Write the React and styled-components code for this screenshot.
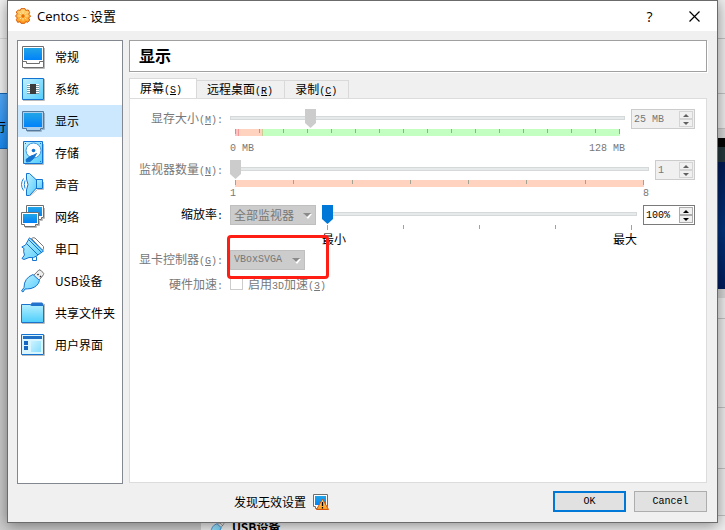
import * as React from 'react';
import styled, { createGlobalStyle, css } from 'styled-components';

const GlobalStyle = createGlobalStyle`
  * {
    box-sizing: border-box;
  }
  body {
    margin: 0;
    color: #000;
    font-family: "Noto Sans CJK SC", sans-serif;
    font-size: 12px;
    line-height: 16px;
  }
  button, input, select {
    margin: 0;
    font-family: inherit;
    font-size: inherit;
  }
`;

const Desktop = styled.div`
  position: relative;
  display: flex;
  flex-direction: column;
  min-height: 100vh;
  padding: 0 7px 7px;
  overflow: hidden;
`;

/* manager window lying under the dialog */

const Backdrop = styled.div`
  position: absolute;
  inset: 0;
  display: grid;
  grid-template-columns: 201px 1fr;
  background: #f0f0f0;
`;

const MachineList = styled.div`
  display: flex;
  flex-direction: column;
  background: #cdcdcd;
`;

const ListToolbar = styled.div`
  height: 93px;
  background: linear-gradient(#f4f4f4 38px, #dcdcdc 38px, #dcdcdc 39px, #f6f6f6 39px);
`;

const ActiveMachine = styled.div`
  display: flex;
  align-items: center;
  height: 56px;
  padding-top: 12px;
  background: linear-gradient(#53adff, #1c8ef6);
  border-top: 1px solid #1668b8;
  border-bottom: 1px solid #1668b8;
`;

const MachineState = styled.span`
  margin-left: -6px;
`;

const Details = styled.div`
  display: flex;
  flex-direction: column;
`;

const Section = styled.div`
  flex: none;
  height: ${(p) => p.$height}px;
  border-bottom: 1px solid #c4c4c4;
`;

const Preview = styled.div`
  flex: none;
  height: 169px;
  border: solid #d9d9d9;
  border-width: 9px 0;
  background: linear-gradient(#050505 9px, #26383d 9px, #26383d 24px, #001a55 24px, #00317c 60%, #001d5e);
`;

const DetailsTitle = styled.div`
  display: flex;
  align-items: flex-start;
  gap: 7px;
  padding: 4px 0 0 8px;
  font-weight: 700;
  line-height: 14px;
`;

/* dialog */

const Dialog = styled.div`
  position: relative;
  flex: 1;
  display: flex;
  flex-direction: column;
  background: #f0f0f0;
  border: 1px solid #6b6b6b;
  box-shadow: 0 2px 14px rgba(0, 0, 0, 0.45);
`;

const TitleBar = styled.header`
  display: flex;
  align-items: center;
  height: 30px;
  padding-left: 7px;
  background: #fff;
`;

const Title = styled.h1`
  flex: 1;
  margin: 0 0 0 6px;
  font-family: "Open Sans", "Noto Sans CJK SC", sans-serif;
  font-size: 13px;
  font-weight: 400;
`;

const TitleButton = styled.button`
  display: flex;
  align-items: center;
  justify-content: center;
  width: 45px;
  height: 30px;
  padding: 0;
  border: none;
  background: none;
  font-family: "Open Sans", sans-serif;
  font-size: 14px;
`;

const Body = styled.div`
  flex: 1;
  display: flex;
  gap: 6px;
  padding: 9px 10px 0 9px;
`;

const Sidebar = styled.nav`
  flex: none;
  width: 106px;
  background: #fff;
  border: 1px solid #828790;
`;

const SidebarItem = styled.a`
  display: flex;
  align-items: center;
  gap: 10px;
  height: 32px;
  padding-left: 3px;
  color: #000;
  white-space: nowrap;
  text-decoration: none;
  background: ${(p) => (p.$active ? '#cce8ff' : 'transparent')};
`;

const Content = styled.main`
  flex: 1;
  display: flex;
  flex-direction: column;
`;

const Heading = styled.h2`
  margin: 0 0 6px;
  height: 32px;
  padding-left: 9px;
  font-size: 16px;
  line-height: 28px;
  background: #fff;
  border: 1px solid #a0a0a0;
  box-shadow: 1px 1px #fff;
`;

const TabList = styled.div`
  display: flex;
  align-items: flex-end;
  height: 20px;
`;

const Tab = styled.button`
  height: 18px;
  padding: 0 11px 0 10px;
  line-height: 16px;
  background: #f0f0f0;
  border: 1px solid #d9d9d9;
  border-left: none;
  border-bottom: none;
  ${(p) => p.$active && css`
    height: 21px;
    margin-bottom: -1px;
    padding: 0 14px 0 10px;
    line-height: 18px;
    background: #fff;
    border-left: 1px solid #d9d9d9;
  `}
`;

const Panel = styled.div`
  flex: 1;
  display: flex;
  flex-direction: column;
  padding: 10px 11px 10px 9px;
  margin-bottom: 1px;
  background: #fff;
  border: 1px solid #dcdcdc;
`;

const Row = styled.div`
  display: grid;
  grid-template-columns: 84px 1fr;
  column-gap: 7px;
  margin-bottom: ${(p) => p.$after || 5}px;
  color: ${(p) => (p.$enabled ? '#000' : '#787878')};
`;

const Label = styled.label`
  line-height: 18px;
  text-align: right;
  white-space: nowrap;
`;

const Mono = styled.span`
  font-family: "Liberation Mono", monospace;
  font-size: 10px;
`;

const Field = styled.div`
  position: relative;
  display: flex;
  align-items: flex-start;
  gap: 6px;
`;

const SliderBox = styled.div`
  flex: 1;
  min-width: 0;
`;

const Range = styled.input`
  appearance: none;
  display: block;
  width: 100%;
  height: 19px;
  margin-bottom: 1px;
  background: none;
  &::-webkit-slider-runnable-track {
    height: 19px;
    background:
      linear-gradient(#e7eaea, #e7eaea) 1px 8px / calc(100% - 2px) 2px no-repeat,
      linear-gradient(#d6d9d9, #d6d9d9) 0 7px / 100% 4px no-repeat;
  }
  &::-webkit-slider-thumb {
    appearance: none;
    width: 11px;
    height: 19px;
    border: none;
    border-radius: 0;
    background: #0078d7;
    clip-path: polygon(0 0, 100% 0, 100% 14px, 50% 100%, 0 14px);
  }
  &:disabled::-webkit-slider-thumb {
    background: #ccc;
  }
`;

const Scale = styled.div`
  display: flex;
  justify-content: space-between;
  height: 7px;
  margin: 0 5px;
  background: ${(p) => p.$fill || 'none'};
`;

const Tick = styled.span`
  width: 1px;
  height: 4px;
  background: #a3a394;
  &:first-child, &:last-child {
    height: 5px;
  }
`;

const Limits = styled.div`
  display: flex;
  justify-content: space-between;
  margin-top: ${(p) => p.$gap || 0}px;
  line-height: 13px;
`;

const Spin = styled.div`
  display: flex;
  align-items: center;
  width: ${(p) => p.$width}px;
  height: 20px;
  padding: 0 1px 0 2px;
  background: ${(p) => (p.$enabled ? '#fff' : '#f0f0f0')};
  border: 1px solid ${(p) => (p.$enabled ? '#7a7a7a' : '#ccc')};
`;

const SpinInput = styled.input`
  flex: 1;
  min-width: 0;
  padding: 0;
  border: none;
  background: none;
  color: #000;
  font-family: "Liberation Mono", monospace;
  font-size: 10px;
  outline: none;
  &:disabled {
    color: #787878;
  }
`;

const SpinButtons = styled.div`
  display: flex;
  flex-direction: column;
  width: 14px;
`;

const SpinButton = styled.button`
  display: flex;
  align-items: center;
  justify-content: center;
  height: 8px;
  padding: 0;
  background: #f0f0f0;
  border: 1px solid #acacac;
  color: #000;
  &:disabled {
    border-color: #d4d4d4;
    color: #606060;
  }
`;

const SelectBox = styled.div`
  position: relative;
  width: ${(p) => p.$width}px;
  height: 20px;
`;

const Select = styled.select`
  appearance: none;
  display: block;
  width: 100%;
  height: 20px;
  padding: 0 0 0 3px;
  border: 1px solid #bfbfbf;
  border-radius: 0;
  background: #ccc;
  color: #787878;
  line-height: 16px;
  opacity: 1;
  ${(p) => p.$mono && css`
    font-family: "Liberation Mono", monospace;
    font-size: 10px;
  `}
`;

const SelectArrow = styled.svg`
  position: absolute;
  right: 4px;
  top: 8px;
  pointer-events: none;
`;

const Highlight = styled.div`
  position: absolute;
  z-index: 1;
  top: -15px;
  left: -3px;
  width: 102px;
  height: 44px;
  border: 3px solid #ff1e14;
  border-radius: 4px;
  pointer-events: none;
`;

const AccelRow = styled(Row)`
  align-items: center;
  height: 14px;
`;

const Check = styled.input`
  appearance: none;
  width: 13px;
  height: 13px;
  background: #fff;
  border: 1px solid #ccc;
`;

const CheckLabel = styled.label`
  margin-left: -1px;
  line-height: 14px;
`;

const Footer = styled.footer`
  display: flex;
  gap: 8px;
  padding: 7px 10px 10px;
`;

const Status = styled.div`
  flex: 1;
  display: flex;
  align-items: center;
  justify-content: center;
  gap: 7px;
`;

const Button = styled.button`
  width: 73px;
  height: 21px;
  padding: 0;
  background: #e1e1e1;
  border: ${(p) => (p.$primary ? '2px solid #0078d7' : '1px solid #adadad')};
  font-family: "Liberation Mono", monospace;
  font-size: 10px;
`;

/* icons */

const Shades = styled.svg`
  position: absolute;
`;

const Defs = () => (
  <Shades width="0" height="0" aria-hidden="true">
    <defs>
      <linearGradient id="screen" x1="0" y1="0" x2="0" y2="1">
        <stop offset="0" stopColor="#22a5e6" />
        <stop offset="1" stopColor="#0082fa" />
      </linearGradient>
      <linearGradient id="pale" x1="0" y1="0" x2="1" y2="1">
        <stop offset="0" stopColor="#c4f1ff" />
        <stop offset="1" stopColor="#52cdfc" />
      </linearGradient>
      <linearGradient id="folder" x1="0" y1="0" x2="0" y2="1">
        <stop offset="0" stopColor="#b5f0ff" />
        <stop offset="1" stopColor="#4ccdfb" />
      </linearGradient>
      <linearGradient id="orange" x1="0" y1="0" x2="0" y2="1">
        <stop offset="0" stopColor="#ffd77a" />
        <stop offset="1" stopColor="#ff9a1a" />
      </linearGradient>
    </defs>
  </Shades>
);

const Icon = ({ size = 24, children }) => (
  <svg width={size} height={size} viewBox="0 0 24 24" fill="none" aria-hidden="true">
    {children}
  </svg>
);

const GeneralIcon = () => (
  <Icon>
    <path d="M3 23.5H23.5V3" stroke="#bbb" />
    <path d="M1.5 1.5H22.5V22.5H1.5Z" fill="#fff" stroke="#6e6e6e" />
    <path d="M2 16.5H5.5V18.5H18.5V16.5H22" stroke="#6e6e6e" />
    <path d="M3 3H21V15H3Z" fill="url(#screen)" />
  </Icon>
);

const SystemIcon = () => (
  <Icon>
    <path d="M2 23.5H23.5V2" stroke="#bbb" />
    <path d="M1.5 1.5H22.5V22.5H1.5Z" fill="url(#pale)" stroke="#1473d0" />
    <path d="M6 7.5H18M6 9.5H18M6 11.5H18M6 13.5H18M6 15.5H18" stroke="#fff" />
    <path d="M6 8.5H18M6 10.5H18M6 12.5H18M6 14.5H18M6 16.5H18" stroke="#7a9aa8" />
    <path d="M9 7H15V17H9Z" fill="#3c3c3c" />
  </Icon>
);

const DisplayIcon = () => (
  <Icon>
    <path d="M6 22.5H20.5V20.5H23.5V4" stroke="#9ab3c7" />
    <path d="M1.5 2.5H22.5V19.5H19.5V21.5H5.5V19.5H1.5Z" fill="#a9cdea" stroke="#52799c" />
    <path d="M3 4H21V18H3Z" fill="url(#screen)" />
  </Icon>
);

const StorageIcon = () => (
  <Icon>
    <path d="M4 23.5H22.5V3" stroke="#bbb" />
    <path d="M2.5 .5H21.5V22.5H2.5Z" fill="url(#pale)" stroke="#1473d0" />
    <circle cx="12.500" cy="9.500" r="7.500" fill="#fff" stroke="#3a97e0" />
    <circle cx="12.500" cy="9.500" r="1.800" fill="#1473d0" />
    <path d="M15.500 12.500L13 14L10 15L5 18.500L5.500 21L9 20.500L12.500 17.500Z" fill="#1473d0" stroke="#1473d0" />
    <path d="M4 2.500H5M19 2.500H20M19 20.500H20" stroke="#1473d0" />
  </Icon>
);

const AudioIcon = () => (
  <Icon>
    <path d="M9 23L16 17L16.500 16.500H22.500V9" stroke="#bbb" />
    <path d="M14.500 6.500H21.500V15.500H14.500Z" fill="url(#pale)" stroke="#1473d0" />
    <path d="M5.500 .5H8.500L15.500 7V15L8.500 22.500H5.500V17L7 11.500L5.500 6Z" fill="url(#pale)" stroke="#1473d0" />
    <path d="M4 7.500Q2.500 11.500 4 15.500M2.500 5.500Q-1.500 11.500 2.500 17.500" stroke="#2080d5" />
  </Icon>
);

const NetworkIcon = () => (
  <Icon>
    <path d="M4 22.500H15.500V20.500H18.500V15.500H21.500V13.500H23.500V3" stroke="#bbb" />
    <path d="M5.500 .5H22.500V12.500H20.500V14.500H8.500V12.500H5.500Z" fill="#fff" stroke="#6e6e6e" />
    <path d="M7 2H21V11H7Z" fill="url(#screen)" />
    <path d="M.5 7.500H17.500V19.500H14.500V21.500H3.500V19.500H.5Z" fill="#fff" stroke="#6e6e6e" />
    <path d="M2 9H16V18H2Z" fill="url(#screen)" />
  </Icon>
);

const SerialIcon = () => (
  <Icon>
    <path d="M10.500 1.500Q12 .2 14 1L22.500 9.500Q23 12 21.500 13.500Z" fill="#fff" stroke="#777" />
    <path d="M4.500 8L8.500 .8L22.500 14L15.500 19Q13 21.500 8 20.500L3 22.500L1 21.500L3.500 18Q2 14.500 3 11.500L.8 10Z" fill="url(#pale)" stroke="#1473d0" />
    <path d="M5.500 6.500L17 18M7.500 2.500L20.500 15.500M11.500 21V23.500H15.500V19.500" stroke="#1473d0" />
  </Icon>
);

const UsbIcon = ({ size }) => (
  <Icon size={size}>
    <path d="M12.500 6.500L18 .8Q20 .5 22.700 4.500Q23 6 17.500 11.500Z" fill="#eee" stroke="#777" />
    <path d="M16.500 5L17.500 6M19 7L20 8" stroke="#333" strokeWidth="1.500" />
    <path d="M12 5.500L18.500 11.500Q17 17.500 10 19.500Q6 20 4 20L2 23L.5 22L3 18.500Q3 9 12 5.500Z" fill="url(#pale)" stroke="#1473d0" />
  </Icon>
);

const FolderIcon = () => (
  <Icon>
    <path d="M1 22.500H23.500V3" stroke="#bbb" />
    <path d="M9 4L11 1.500H21L22.500 3V7H9Z" fill="#2472cc" />
    <path d="M.5 3.500H9L10.500 4.500H22.500V21.500H.5Z" fill="url(#folder)" stroke="#1b73cb" />
  </Icon>
);

const InterfaceIcon = () => (
  <Icon>
    <path d="M1 22.500H23.500V2" stroke="#bbb" />
    <path d="M.5 1.500H22.500V21.500H.5Z" fill="#d9f6ff" stroke="#1473d0" />
    <path d="M2 3H21V6H2Z" fill="#1f6fc4" />
    <path d="M3 8H7V12H3ZM3 13H7V17H3Z" fill="#1467c0" />
    <path d="M10 8H20V19H10Z" fill="url(#pale)" opacity=".6" />
  </Icon>
);

const GearIcon = () => (
  <Icon size={16}>
    <path
      d="M9 1H15L16 3.500L20 3L22 7L20.500 9.500L23.500 12L20.500 15L22 18L19 21.500L16 20.500L14.500 23H9L8 20.500L4 21.500L2 17.500L3.500 15L.8 12L3.500 9L2 6L5 3L8 3.500Z"
      fill="url(#orange)"
      stroke="#d95a00"
      strokeWidth="1.500"
    />
    <path d="M12 5V9M12 15V19M5 12H9M15 12H19M7 7L9.500 9.500M14.500 14.500L17 17M17 7L14.500 9.500M9.500 14.500L7 17" stroke="#ffe4a0" strokeWidth="1.500" />
    <circle cx="12" cy="12" r="2.500" fill="#e96c00" />
  </Icon>
);

const WarningIcon = () => (
  <svg width="16" height="16" viewBox="0 0 16 16" fill="none" aria-hidden="true">
    <path d="M.5 .5H14.500V12.500H12.500V14.500H2.500V12.500H.5Z" fill="#fff" stroke="#6e6e6e" />
    <path d="M2 2H13V11H2Z" fill="url(#screen)" />
    <path d="M9.500 5L15.500 15.500H3.500Z" fill="url(#orange)" stroke="#d9540b" />
    <path d="M9.500 8V12M9.500 13V14.500" stroke="#000" strokeWidth="1.300" />
  </svg>
);

const items = [
  { id: 'general', text: '常规', Pic: GeneralIcon },
  { id: 'system', text: '系统', Pic: SystemIcon },
  { id: 'display', text: '显示', Pic: DisplayIcon, active: true },
  { id: 'storage', text: '存储', Pic: StorageIcon },
  { id: 'audio', text: '声音', Pic: AudioIcon },
  { id: 'network', text: '网络', Pic: NetworkIcon },
  { id: 'serial', text: '串口', Pic: SerialIcon },
  { id: 'usb', text: 'USB设备', Pic: UsbIcon },
  { id: 'folders', text: '共享文件夹', Pic: FolderIcon },
  { id: 'ui', text: '用户界面', Pic: InterfaceIcon },
];

const Key = ({ k }) => <Mono>(<u>{k}</u>)</Mono>;

const Ticks = ({ count, fill }) => (
  <Scale $fill={fill}>
    {Array.from({ length: count }, (_, i) => <Tick key={i} />)}
  </Scale>
);

const SpinBox = ({ label, value, width, enabled }) => (
  <Spin $width={width} $enabled={enabled}>
    <SpinInput aria-label={label} defaultValue={value} disabled={!enabled} />
    <SpinButtons>
      <SpinButton aria-label="+" disabled={!enabled}>
        <svg width="6" height="3" viewBox="0 0 6 3"><path d="M0 3L3 0L6 3Z" fill="currentColor" /></svg>
      </SpinButton>
      <SpinButton aria-label="-" disabled={!enabled}>
        <svg width="6" height="3" viewBox="0 0 6 3"><path d="M0 0L3 3L6 0Z" fill="currentColor" /></svg>
      </SpinButton>
    </SpinButtons>
  </Spin>
);

const DropDown = ({ id, label, value, width, mono }) => (
  <SelectBox $width={width}>
    <Select id={id} aria-label={label} $mono={mono} disabled>
      <option>{value}</option>
    </Select>
    <SelectArrow width="9" height="6" viewBox="0 0 9 6">
      <path d="M1 1H9L5 6Z" fill="#fff" />
      <path d="M0 0H8L4 4Z" fill="#8a8a8a" />
    </SelectArrow>
  </SelectBox>
);

const memoryFill = 'linear-gradient(90deg, #ffc2c2 3px, #f39a9a 3px, #f39a9a 4px, #ffd3bf 4px, #ffd3bf 7%, #c9cf94 7%, #c9cf94 calc(7% + 1px), #c3ffc1 calc(7% + 1px))';

const App = () => {
  return (
    <Desktop>
      <GlobalStyle />
      <Defs />
      <Backdrop>
        <MachineList>
          <ListToolbar />
          <ActiveMachine><MachineState>行</MachineState></ActiveMachine>
        </MachineList>
        <Details>
          <Section $height={39} />
          <Section $height={55} />
          <Section $height={35} />
          <Preview />
          <Section $height={21} />
          <Section $height={89} />
          <Section $height={61} />
          <Section $height={47} />
          <DetailsTitle>
            <UsbIcon size={16} />
            <span>USB设备</span>
          </DetailsTitle>
        </Details>
      </Backdrop>
      <Dialog role="dialog" aria-labelledby="title">
        <TitleBar>
          <GearIcon />
          <Title id="title">Centos - 设置</Title>
          <TitleButton>?</TitleButton>
          <TitleButton aria-label="Close">
            <svg width="11" height="11" viewBox="0 0 11 11">
              <path d="M.5 .5L10.500 10.500M10.500 .5L.5 10.500" stroke="#000" strokeWidth="1.200" />
            </svg>
          </TitleButton>
        </TitleBar>
        <Body>
          <Sidebar>
            {items.map(({ id, text, Pic, active }) => (
              <SidebarItem key={id} href={`#${id}`} $active={active}>
                <Pic />
                <span>{text}</span>
              </SidebarItem>
            ))}
          </Sidebar>
          <Content>
            <Heading>显示</Heading>
            <TabList role="tablist">
              <Tab role="tab" aria-selected="true" $active>屏幕<Key k="S" /></Tab>
              <Tab role="tab">远程桌面<Key k="R" /></Tab>
              <Tab role="tab">录制<Key k="C" /></Tab>
            </TabList>
            <Panel role="tabpanel">
              <Row>
                <Label htmlFor="memory">显存大小<Key k="M" /><Mono>:</Mono></Label>
                <Field>
                  <SliderBox>
                    <Range id="memory" type="range" min="0" max="128" defaultValue="25" disabled />
                    <Ticks count={17} fill={memoryFill} />
                    <Limits $gap={6}><Mono>0 MB</Mono><Mono>128 MB</Mono></Limits>
                  </SliderBox>
                  <SpinBox label="显存大小" value="25 MB" width={64} />
                </Field>
              </Row>
              <Row>
                <Label htmlFor="monitors">监视器数量<Key k="N" /><Mono>:</Mono></Label>
                <Field>
                  <SliderBox>
                    <Range id="monitors" type="range" min="1" max="8" defaultValue="1" disabled />
                    <Ticks count={8} fill="#ffd3bf" />
                    <Limits><Mono>1</Mono><Mono>8</Mono></Limits>
                  </SliderBox>
                  <SpinBox label="监视器数量" value="1" width={40} />
                </Field>
              </Row>
              <Row $enabled>
                <Label htmlFor="scale">缩放率<Mono>:</Mono></Label>
                <Field>
                  <DropDown label="监视器" value="全部监视器" width={86} />
                  <SliderBox>
                    <Range id="scale" type="range" min="100" max="200" defaultValue="100" />
                    <Ticks count={5} />
                    <Limits><span>最小</span><span>最大</span></Limits>
                  </SliderBox>
                  <SpinBox label="缩放率" value="100%" width={52} enabled />
                </Field>
              </Row>
              <Row $after={4}>
                <Label htmlFor="controller">显卡控制器<Key k="G" /><Mono>:</Mono></Label>
                <Field>
                  <DropDown id="controller" value="VBoxSVGA" width={75} mono />
                  <Highlight />
                </Field>
              </Row>
              <AccelRow>
                <Label as="span">硬件加速<Mono>:</Mono></Label>
                <Field>
                  <Check id="accel" type="checkbox" disabled />
                  <CheckLabel htmlFor="accel">启用<Mono>3D</Mono>加速<Key k="3" /></CheckLabel>
                </Field>
              </AccelRow>
            </Panel>
          </Content>
        </Body>
        <Footer>
          <Status>
            <span>发现无效设置</span>
            <WarningIcon />
          </Status>
          <Button $primary>OK</Button>
          <Button>Cancel</Button>
        </Footer>
      </Dialog>
    </Desktop>
  );
};

export default App;
